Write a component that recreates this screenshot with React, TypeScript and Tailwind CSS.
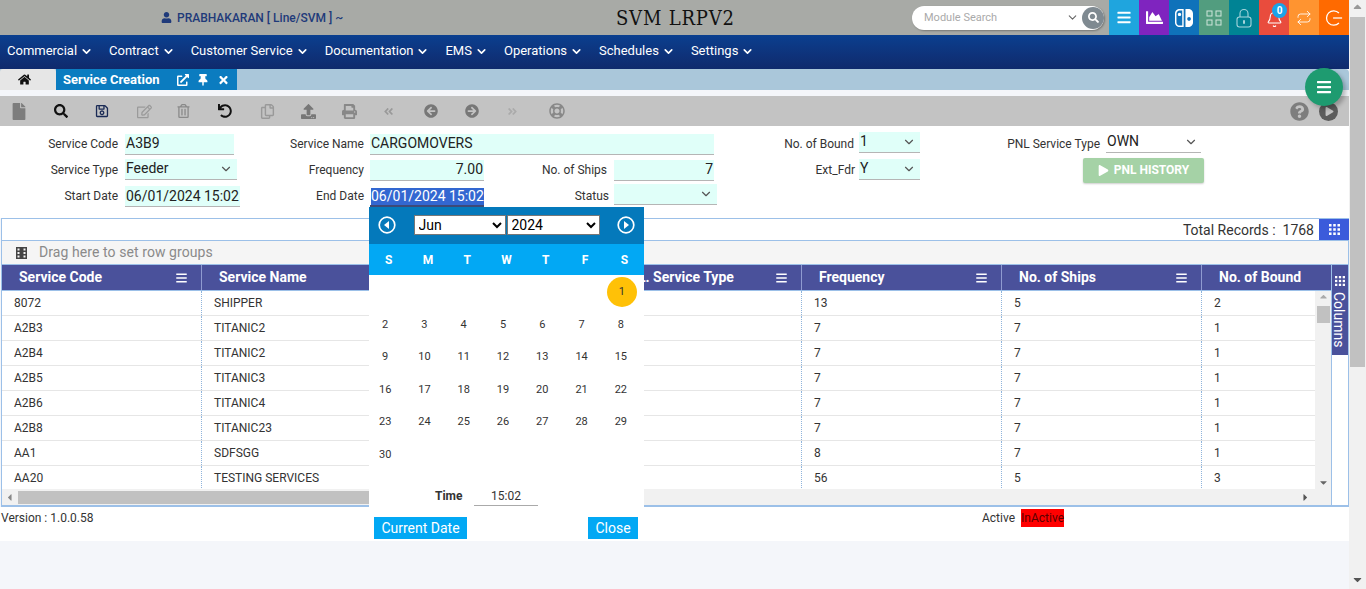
import { ChevronDown, Repeat, Bell } from 'lucide-react'
import {
  FaUser, FaHome, FaExternalLinkAlt, FaThumbtack, FaTimes, FaFile, FaSearch, FaRegSave, FaRegEdit,
  FaRegTrashAlt, FaUndo, FaRegCopy, FaUpload, FaPrint, FaAngleDoubleLeft, FaAngleDoubleRight,
  FaArrowCircleLeft, FaArrowCircleRight, FaQuestionCircle, FaPlay, FaBars, FaChartArea, FaRegLifeRing,
  FaCaretUp, FaCaretDown, FaCaretLeft, FaCaretRight,
} from 'react-icons/fa'
import { SiNintendoswitch } from 'react-icons/si'

const NAV = ['Commercial', 'Contract', 'Customer Service', 'Documentation', 'EMS', 'Operations', 'Schedules', 'Settings']

const ROWS = [
  ['8072', 'SHIPPER', '13', '5', '2'],
  ['A2B3', 'TITANIC2', '7', '7', '1'],
  ['A2B4', 'TITANIC2', '7', '7', '1'],
  ['A2B5', 'TITANIC3', '7', '7', '1'],
  ['A2B6', 'TITANIC4', '7', '7', '1'],
  ['A2B8', 'TITANIC23', '7', '7', '1'],
  ['AA1', 'SDFSGG', '8', '7', '1'],
  ['AA20', 'TESTING SERVICES', '56', '5', '3'],
]

const DAYS = ['', '', '', '', '', '', '1', ...Array.from({ length: 29 }, (_, i) => String(i + 2))]

function LogoutIcon() {
  return (
    <svg viewBox="0 0 20 20" className="h-[18px] w-[18px]" fill="none" stroke="currentColor" strokeWidth="1.4">
      <path d="M15.5 4.5A8 8 0 1 0 15.5 15.5" />
      <path d="M9 10h10" />
    </svg>
  )
}

function GridIcon() {
  return (
    <svg viewBox="0 0 16 16" className="h-[16px] w-[16px]" fill="none" stroke="currentColor" strokeWidth="1">
      <rect x="1" y="1" width="5" height="5" />
      <rect x="10" y="1" width="5" height="5" />
      <rect x="1" y="10" width="5" height="5" />
      <rect x="10" y="10" width="5" height="5" />
    </svg>
  )
}

function LockIcon() {
  return (
    <svg viewBox="0 0 16 20" className="h-[20px] w-[16px]" fill="none" stroke="currentColor" strokeWidth="1.1">
      <path d="M4 9V5.5a4 4 0 0 1 8 0V9" />
      <rect x="1" y="9" width="14" height="10" rx="2.5" />
      <rect x="7" y="12" width="2" height="4" rx="1" fill="currentColor" stroke="none" />
    </svg>
  )
}

function DotsIcon({ className }: { className?: string }) {
  return (
    <svg viewBox="0 0 13 13" className={className} fill="currentColor">
      {[0, 5, 10].flatMap((y) => [0, 5, 10].map((x) => <rect key={`${x}-${y}`} x={x} y={y} width="3" height="3" />))}
    </svg>
  )
}

function RowGroupIcon() {
  return (
    <svg viewBox="0 0 11 12" className="h-[12px] w-[11px] text-[#444]" fill="currentColor">
      <path d="M0 0h11v12H0zM1.5 1.5v2h2v-2zm6 0v2h2v-2zm-6 3.5v2h2V5zm6 0v2h2V5zm-6 3.5v2h2v-2zm6 0v2h2v-2z" fillRule="evenodd" />
    </svg>
  )
}

function CircleArrow({ left }: { left?: boolean }) {
  return (
    <svg viewBox="0 0 18 18" className="h-[18px] w-[18px] text-white">
      <circle cx="9" cy="9" r="7.8" fill="none" stroke="currentColor" strokeWidth="1.7" />
      <path d={left ? 'M11 5v8L6 9z' : 'M7 5v8l5-4z'} fill="currentColor" />
    </svg>
  )
}

function Label({ children, className }: { children: string; className?: string }) {
  return <div className={`text-right text-[12px] text-[#333] ${className ?? 'pr-[7px]'}`}>{children}</div>
}

function Field({ value, right, select, className }: { value?: string; right?: boolean; select?: boolean; className?: string }) {
  return (
    <div className={`flex h-[21px] items-center whitespace-nowrap border-b border-[#b5b5b5] bg-[#e0fff9] px-[1px] text-[14px] text-[#222] ${right ? 'justify-end' : 'justify-between'} ${className ?? ''}`}>
      <span>{value}</span>
      {select && <ChevronDown className="mr-[3px] h-[14px] w-[14px] text-[#555]" strokeWidth={2} />}
    </div>
  )
}

function HeaderCell({ title, menu = true, className }: { title: string; menu?: boolean; className?: string }) {
  return (
    <div className={`flex h-full items-center justify-between border-r border-[#8f9ad0] pl-[17px] pr-[14px] text-[14px] font-bold text-white ${className ?? 'w-[200px]'}`}>
      <span>{title}</span>
      {menu && <FaBars className="h-[12px] w-[11px]" />}
    </div>
  )
}

function Cell({ children, last }: { children?: string; last?: boolean }) {
  return (
    <div className={`flex h-full items-center pl-[12px] text-[12px] text-[#333] ${last ? 'w-[113px]' : 'w-[200px] border-r border-dotted border-[#8fb4dc]'}`}>
      {children}
    </div>
  )
}

export default function App() {
  return (
    <div className="flex h-[589px] w-[1366px] overflow-hidden bg-[#f4f6fa] font-['Roboto',sans-serif]">
      <div className="relative w-[1349px] shrink-0">
        {/* Top bar */}
        <div className="flex h-[35px] items-center bg-[#a8aaa6]">
          <div className="flex w-[616px] items-center gap-[5px] pl-[161px] text-[12px] font-medium text-[#1f3a7a]">
            <FaUser className="h-[11px] w-[11px]" />
            <span>PRABHAKARAN [ Line/SVM ] ~</span>
          </div>
          <div className="w-[296px] font-['DejaVu_Serif',serif] text-[20px] leading-none tracking-[0.8px] text-[#111] [font-stretch:condensed]">SVM LRPV2</div>
          <div className="flex h-[24px] w-[192px] items-center justify-between rounded-[12px] bg-white pl-[12px] text-[11px] text-[#aaa] shadow-[1px_1px_2px_rgba(0,0,0,0.3)]">
            <span className="mt-[1px]">Module Search</span>
            <div className="flex items-center gap-[3px]">
              <ChevronDown className="h-[13px] w-[13px] text-[#666]" />
              <div className="flex h-[22px] w-[22px] items-center justify-center rounded-full bg-[#7f8a91] text-white">
                <FaSearch className="h-[11px] w-[11px]" />
              </div>
            </div>
          </div>
          <div className="ml-[5px] flex h-full text-white">
            <div className="flex w-[30px] items-center justify-center bg-[#1fa5de]"><FaBars className="h-[15px] w-[14px]" /></div>
            <div className="flex w-[30px] items-center justify-center bg-[#7f24bf]"><FaChartArea className="h-[17px] w-[17px]" /></div>
            <div className="flex w-[30px] items-center justify-center bg-[#0f72ba]"><SiNintendoswitch className="h-[18px] w-[18px]" /></div>
            <div className="flex w-[30px] items-center justify-center bg-[#529d7f] text-[#cfe6dc]"><GridIcon /></div>
            <div className="flex w-[30px] items-center justify-center bg-[#008394] text-[#a5d5dc]"><LockIcon /></div>
            <div className="relative flex w-[30px] items-center justify-center bg-[#e94c3d]">
              <Bell className="mt-[3px] h-[17px] w-[17px]" strokeWidth={1.5} />
              <span className="absolute left-[13px] top-[3px] flex h-[15px] w-[15px] items-center justify-center rounded-full bg-[#1ba3e8] text-[10px] font-bold">0</span>
            </div>
            <div className="flex w-[30px] items-center justify-center bg-[#ff9430]"><Repeat className="h-[16px] w-[16px]" strokeWidth={1.3} /></div>
            <div className="flex w-[30px] items-center justify-center bg-[#ff6a00]"><LogoutIcon /></div>
          </div>
        </div>

        {/* Menu */}
        <div className="flex h-[34px] items-center gap-[16px] bg-gradient-to-b from-[#0a3f8f] to-[#0f2a6c] pb-[3px] pl-[7px] text-[13px] text-white">
          {NAV.map((n) => (
            <div key={n} className="flex items-center gap-[3px]">
              <span>{n}</span>
              <ChevronDown className="mt-[2px] h-[13px] w-[13px]" strokeWidth={3} />
            </div>
          ))}
        </div>

        {/* Tabs */}
        <div className="flex h-[21px] rounded-tr-[4px] bg-[#aac7da]">
          <div className="flex w-[56px] items-center justify-center rounded-t-[3px] bg-[#e6e6e6] pr-[8px] text-[#111]"><FaHome className="h-[13px] w-[13px]" /></div>
          <div className="flex w-[181px] items-center bg-[#0b7cc0] pl-[7px] text-[13px] font-bold text-white">
            <span className="w-[114px]">Service Creation</span>
            <FaExternalLinkAlt className="h-[12px] w-[12px]" />
            <FaThumbtack className="ml-[9px] h-[12px] w-[10px]" />
            <FaTimes className="ml-[10px] h-[12px] w-[11px]" />
          </div>
        </div>

        {/* Toolbar */}
        <div className="mt-[6px] flex h-[30px] items-center bg-[#c3c3c3] pl-[12px] pr-[11px]">
          <FaFile className="h-[17px] w-[14px] text-[#7d7d7d]" />
          <FaSearch className="ml-[28px] h-[14px] w-[14px] text-[#111]" />
          <FaRegSave className="ml-[27px] h-[14px] w-[14px] text-[#1a2a55]" />
          <FaRegEdit className="ml-[28px] h-[15px] w-[15px] text-[#9a9a9a]" />
          <FaRegTrashAlt className="ml-[25px] h-[14px] w-[13px] text-[#8a8a8a]" />
          <FaUndo className="ml-[28px] h-[14px] w-[14px] text-[#111]" />
          <FaRegCopy className="ml-[28px] h-[15px] w-[15px] text-[#999]" />
          <FaUpload className="ml-[26px] h-[15px] w-[15px] text-[#777]" />
          <FaPrint className="ml-[26px] h-[15px] w-[15px] text-[#888]" />
          <FaAngleDoubleLeft className="ml-[26px] h-[11px] w-[11px] text-[#999]" />
          <FaArrowCircleLeft className="ml-[30px] h-[14px] w-[14px] text-[#777]" />
          <FaArrowCircleRight className="ml-[27px] h-[14px] w-[14px] text-[#777]" />
          <FaAngleDoubleRight className="ml-[28px] h-[11px] w-[11px] text-[#aaa]" />
          <FaRegLifeRing className="ml-[31px] h-[16px] w-[16px] text-[#888]" />
          <FaQuestionCircle className="ml-auto h-[19px] w-[19px] text-[#7d7d7d]" />
          <div className="ml-[10px] flex h-[19px] w-[19px] items-center justify-center rounded-full bg-[#5c5c5c]"><FaPlay className="ml-[2px] h-[9px] w-[9px] text-[#c3c3c3]" /></div>
        </div>

        {/* Form */}
        <div className="grid h-[92px] grid-cols-[125px_115px_130px_114px_130px_103px_142px_61px_186px_98px] grid-rows-[26px_26px_26px] items-center bg-white pt-[5px]">
          <Label>Service Code</Label>
          <Field value="A3B9" className="w-[109px]" />
          <Label className="pr-[6px]">Service Name</Label>
          <Field value="CARGOMOVERS" className="col-span-3 w-[344px]" />
          <Label className="pr-[5px]">No. of Bound</Label>
          <Field value="1" select className="-translate-y-[2px]" />
          <Label className="pr-[6px]">PNL Service Type</Label>
          <div className="flex h-[21px] w-[95px] -translate-y-[2px] items-center justify-between border-b border-[#b5b5b5] pl-[1px] text-[14px] text-[#222]">
            <span>OWN</span>
            <ChevronDown className="mr-[3px] h-[14px] w-[14px] text-[#555]" />
          </div>

          <Label>Service Type</Label>
          <Field value="Feeder" select className="w-[112px] -translate-y-[1px]" />
          <Label className="pr-[6px]">Frequency</Label>
          <Field value="7.00" right />
          <Label>No. of Ships</Label>
          <Field value="7" right className="w-[100px]" />
          <Label className="pr-[4px]">Ext_Fdr</Label>
          <Field value="Y" select className="-translate-y-[1px]" />
          <div className="col-span-2 flex justify-end">
            <button className="flex h-[25px] w-[121px] items-center justify-center gap-[5px] rounded-[2px] bg-[#a5d2a6] text-[12px] font-bold text-white shadow-[0_1px_2px_rgba(0,0,0,0.2)]">
              <FaPlay className="h-[11px] w-[11px]" />
              PNL HISTORY
            </button>
          </div>

          <Label>Start Date</Label>
          <Field value="06/01/2024 15:02" className="pt-[2px]" />
          <Label className="pr-[6px]">End Date</Label>
          <div className="flex h-[21px] items-center whitespace-nowrap border-b-2 border-[#3d4a78] pl-[1px] pt-[2px] text-[14px]">
            <span className="bg-[#3367d1] leading-[17px] text-white">06/01/2024 15:02</span>
          </div>
          <Label className="pr-[5px]">Status</Label>
          <Field select className="-translate-y-[2px]" />
        </div>

        {/* Data grid */}
        <div className="ml-[1px] h-[289px] w-[1348px] border-x border-y-[1.5px] border-b-[3px] border-[#9cc0e8]">
          <div className="flex h-[21px] items-center justify-end bg-white text-[14px] text-[#333]">
            <span className="mr-[5px] pt-[1px]">Total Records :&nbsp; 1768</span>
            <div className="-mr-[1px] flex h-full w-[30px] items-center justify-center bg-[#3b5bdb] text-white"><DotsIcon className="h-[11px] w-[11px]" /></div>
          </div>
          <div className="flex h-[25px] items-center gap-[12px] border-y border-[#9cc0e8] bg-[#f5f5f5] pl-[14px] text-[14px] tracking-[0.08px] text-[#8a8a8a]">
            <RowGroupIcon />
            <span>Drag here to set row groups</span>
          </div>
          <div className="flex h-[240px]">
            <div className="w-[1329px]">
              <div className="flex h-[26px] border-b border-[#9cc0e8] bg-[#4a519b]">
                <HeaderCell title="Service Code" />
                <HeaderCell title="Service Name" />
                <HeaderCell title="" menu={false} />
                <HeaderCell title="PNL. Service Type" />
                <HeaderCell title="Frequency" />
                <HeaderCell title="No. of Ships" />
                <HeaderCell title="No. of Bound" menu={false} className="w-[129px] border-r-0" />
              </div>
              <div className="flex h-[198px] overflow-hidden">
                <div className="w-[1313px]">
                  {ROWS.map((r) => (
                    <div key={r[0]} className="flex h-[25px] border-b border-[#e6e6e6] bg-white">
                      <Cell>{r[0]}</Cell>
                      <Cell>{r[1]}</Cell>
                      <Cell />
                      <Cell />
                      <Cell>{r[2]}</Cell>
                      <Cell>{r[3]}</Cell>
                      <Cell last>{r[4]}</Cell>
                    </div>
                  ))}
                </div>
                <div className="flex w-[16px] flex-col items-center justify-between bg-[#f1f1f1] pb-[1px] text-[#666]">
                  <div className="flex flex-col items-center">
                    <FaCaretUp className="h-[11px] w-[11px] text-[#aaa]" />
                    <div className="mt-[4px] h-[17px] w-[13px] bg-[#c1c1c1]" />
                  </div>
                  <FaCaretDown className="h-[11px] w-[11px]" />
                </div>
              </div>
              <div className="flex h-[16px] items-center bg-[#f1f1f1]">
                <FaCaretLeft className="ml-[2px] h-[11px] w-[11px] text-[#888]" />
                <div className="ml-[3px] h-[13px] w-[500px] bg-[#c1c1c1]" />
                <FaCaretRight className="ml-[782px] h-[11px] w-[11px] text-[#555]" />
              </div>
            </div>
            <div className="flex w-[18px] justify-center border-l border-[#9cc0e8] bg-white">
              <div className="h-[90px] w-[16px] bg-[#4a519b] pt-[11px] text-white">
                <DotsIcon className="mx-auto h-[10px] w-[10px]" />
                <div className="mt-[6px] flex justify-center text-[14px] leading-none [writing-mode:vertical-rl]">Columns</div>
              </div>
            </div>
          </div>
        </div>

        {/* Footer */}
        <div className="flex h-[34px] items-start bg-white pt-[2px] text-[12px] text-[#333]">
          <span className="ml-[1px] w-[981px]">Version : 1.0.0.58</span>
          <span>Active</span>
          <span className="ml-[6px] bg-[#ff0000] text-[#5a0000]">InActive</span>
        </div>

        {/* Date picker */}
        <div className="absolute left-[369px] top-[207px] h-[334px] w-[275px] bg-white text-[#333]">
          <div className="flex h-[37px] items-center justify-between bg-[#0479bb] px-[9px] pb-[1px]">
            <CircleArrow left />
            <div className="flex text-[14px] text-black">
              <select defaultValue="Jun" className="h-[20px] w-[92px] border border-[#777] bg-white">
                {['Jan', 'Feb', 'Mar', 'Apr', 'May', 'Jun', 'Jul', 'Aug', 'Sep', 'Oct', 'Nov', 'Dec'].map((m) => <option key={m}>{m}</option>)}
              </select>
              <select defaultValue="2024" className="ml-[1px] h-[20px] w-[93px] border border-[#777] bg-white">
                {['2023', '2024', '2025'].map((y) => <option key={y}>{y}</option>)}
              </select>
            </div>
            <CircleArrow />
          </div>
          <div className="grid h-[31px] grid-cols-7 items-center bg-[#02a8f4] text-center text-[12px] font-bold text-white">
            {['S', 'M', 'T', 'W', 'T', 'F', 'S'].map((d, i) => <span key={i}>{d}</span>)}
          </div>
          <div className="grid h-[196px] grid-cols-7 grid-rows-6 items-center pt-[1px] text-center text-[11px]">
            {DAYS.map((d, i) =>
              d === '1' ? (
                <span key={i} className="flex justify-center pr-[5px]">
                  <span className="flex h-[30px] w-[30px] items-center justify-center rounded-full bg-[#ffc107]">1</span>
                </span>
              ) : (
                <span key={i} className="pr-[7px]">{d}</span>
              ),
            )}
          </div>
          <div className="flex h-[44px] items-start pl-[66px] pt-[16px] text-[12px]">
            <span className="w-[39px] font-bold">Time</span>
            <span className="w-[64px] border-b border-[#aaa] text-center">15:02</span>
          </div>
          <div className="flex justify-between pl-[5px] pr-[6px] pt-[2px] text-[14px] text-white">
            <div className="flex h-[22px] w-[93px] items-center justify-center bg-[#02a8f4]">Current Date</div>
            <div className="flex h-[22px] w-[50px] items-center justify-center bg-[#02a8f4]">Close</div>
          </div>
        </div>

        {/* Floating menu button */}
        <div className="absolute left-[1305px] top-[68px] flex h-[38px] w-[38px] items-center justify-center rounded-full bg-[#1e9b70] text-white shadow-[3px_3px_4px_rgba(0,0,0,0.25)]">
          <FaBars className="h-[16px] w-[18px]" />
        </div>
      </div>

      {/* Page scrollbar */}
      <div className="flex w-[17px] flex-col items-center justify-between bg-[#f1f1f1] pb-[3px] text-[#555]">
        <div className="flex w-full flex-col items-center">
          <FaCaretUp className="h-[13px] w-[13px] text-[#999]" />
          <div className="mt-[4px] h-[350px] w-[15px] bg-[#c1c1c1]" />
        </div>
        <FaCaretDown className="h-[13px] w-[13px]" />
      </div>
    </div>
  )
}
